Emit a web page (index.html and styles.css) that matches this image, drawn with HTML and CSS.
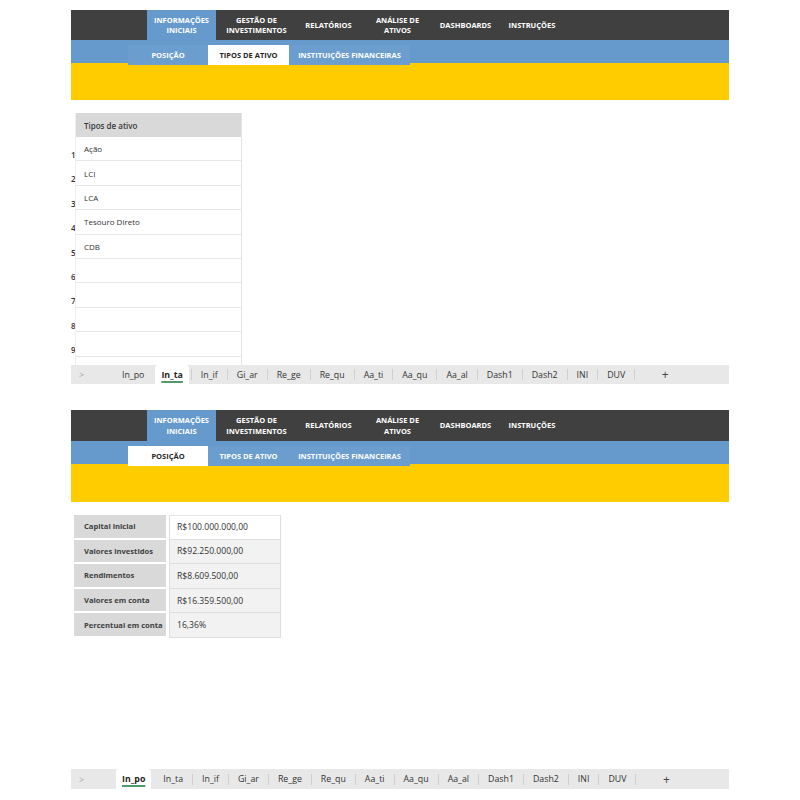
FILE: index.html
```html
<!DOCTYPE html>
<html lang="pt">
<head>
<meta charset="utf-8">
<title>Planilha</title>
<link rel="stylesheet" href="styles.css">
</head>
<body>
<div class="sheet sheet-one">
  <div class="nav">
    <div class="nav-spacer"></div>
    <div class="nav-item active w1">INFORMAÇÕES<br>INICIAIS</div>
    <div class="nav-item w2">GESTÃO DE<br>INVESTIMENTOS</div>
    <div class="nav-item w3">RELATÓRIOS</div>
    <div class="nav-item w4">ANÁLISE DE<br>ATIVOS</div>
    <div class="nav-item w5">DASHBOARDS</div>
    <div class="nav-item w6">INSTRUÇÕES</div>
  </div>
  <div class="subnav">
    <div class="subtabs">
      <div class="sub s1">POSIÇÃO</div>
      <div class="sub s2 on">TIPOS DE ATIVO</div>
      <div class="sub s3">INSTITUIÇÕES FINANCEIRAS</div>
    </div>
  </div>
  <div class="banner"></div>
  <div class="content content-one">
    <div class="list">
      <div class="rownums">
        <div class="rn head"></div>
        <div class="rn">1</div><div class="rn">2</div><div class="rn">3</div>
        <div class="rn">4</div><div class="rn">5</div><div class="rn">6</div>
        <div class="rn">7</div><div class="rn">8</div><div class="rn">9</div>
      </div>
      <div class="types">
        <div class="trow thead">Tipos de ativo</div>
        <div class="trow">Ação</div>
        <div class="trow">LCI</div>
        <div class="trow">LCA</div>
        <div class="trow">Tesouro Direto</div>
        <div class="trow">CDB</div>
        <div class="trow"></div>
        <div class="trow"></div>
        <div class="trow"></div>
        <div class="trow"></div>
        <div class="trow"></div>
      </div>
    </div>
  </div>
  <div class="tabbar">
    <div class="arrow">&gt;</div>
    <div class="tab first">In_po</div>
    <div class="tab on">In_ta</div>
    <span class="sep"></span>
    <div class="tab">In_if</div><span class="sep"></span>
    <div class="tab">Gi_ar</div><span class="sep"></span>
    <div class="tab">Re_ge</div><span class="sep"></span>
    <div class="tab">Re_qu</div><span class="sep"></span>
    <div class="tab">Aa_ti</div><span class="sep"></span>
    <div class="tab">Aa_qu</div><span class="sep"></span>
    <div class="tab">Aa_al</div><span class="sep"></span>
    <div class="tab">Dash1</div><span class="sep"></span>
    <div class="tab">Dash2</div><span class="sep"></span>
    <div class="tab">INI</div><span class="sep"></span>
    <div class="tab">DUV</div><span class="sep"></span>
    <div class="plus">+</div>
  </div>
</div>

<div class="sheet sheet-two">
  <div class="nav nav-two">
    <div class="nav-spacer"></div>
    <div class="nav-item active w1">INFORMAÇÕES<br>INICIAIS</div>
    <div class="nav-item w2">GESTÃO DE<br>INVESTIMENTOS</div>
    <div class="nav-item w3">RELATÓRIOS</div>
    <div class="nav-item w4">ANÁLISE DE<br>ATIVOS</div>
    <div class="nav-item w5">DASHBOARDS</div>
    <div class="nav-item w6">INSTRUÇÕES</div>
  </div>
  <div class="subnav">
    <div class="subtabs">
      <div class="sub s1 on">POSIÇÃO</div>
      <div class="sub s2">TIPOS DE ATIVO</div>
      <div class="sub s3">INSTITUIÇÕES FINANCEIRAS</div>
    </div>
  </div>
  <div class="banner banner-two"></div>
  <div class="content content-two">
    <div class="kv">
      <div class="kv-row"><div class="k">Capital inicial</div><div class="v v-first">R$100.000.000,00</div></div>
      <div class="kv-row"><div class="k">Valores investidos</div><div class="v">R$92.250.000,00</div></div>
      <div class="kv-row"><div class="k">Rendimentos</div><div class="v">R$8.609.500,00</div></div>
      <div class="kv-row"><div class="k">Valores em conta</div><div class="v">R$16.359.500,00</div></div>
      <div class="kv-row"><div class="k">Percentual em conta</div><div class="v">16,36%</div></div>
    </div>
  </div>
  <div class="tabbar tabbar-two">
    <div class="arrow">&gt;</div>
    <div class="tab on">In_po</div>
    <div class="tab">In_ta</div><span class="sep"></span>
    <div class="tab">In_if</div><span class="sep"></span>
    <div class="tab">Gi_ar</div><span class="sep"></span>
    <div class="tab">Re_ge</div><span class="sep"></span>
    <div class="tab">Re_qu</div><span class="sep"></span>
    <div class="tab">Aa_ti</div><span class="sep"></span>
    <div class="tab">Aa_qu</div><span class="sep"></span>
    <div class="tab">Aa_al</div><span class="sep"></span>
    <div class="tab">Dash1</div><span class="sep"></span>
    <div class="tab">Dash2</div><span class="sep"></span>
    <div class="tab">INI</div><span class="sep"></span>
    <div class="tab">DUV</div><span class="sep"></span>
    <div class="plus">+</div>
  </div>
</div>
</body>
</html>
```

FILE: styles.css
```css
* { box-sizing: border-box; }
html, body { margin: 0; padding: 0; background: #ffffff; }
body { font-family: "Open Sans", "Liberation Sans", sans-serif; color: #333; }

.sheet { width: 658px; margin-left: 71px; }
.sheet-one { margin-top: 10px; }
.sheet-two { margin-top: 26px; }

/* top navigation */
.nav {
  display: flex;
  height: 30px;
  background: #404040;
}
.nav-two { height: 31px; }
.nav-spacer { width: 76px; flex: none; }
.nav-item {
  flex: none;
  display: flex;
  align-items: center;
  justify-content: center;
  text-align: center;
  color: #ffffff;
  font-weight: 700;
  font-size: 7.5px;
  line-height: 10.5px;
}
.nav-item.active { background: #6699cc; }
.w1 { width: 69px; }
.w2 { width: 81px; }
.w3 { width: 63px; }
.w4 { width: 75px; }
.w5 { width: 61px; }
.w6 { width: 72px; }

/* sub navigation */
.subnav {
  display: flex;
  height: 23px;
  background: #6699cc;
  padding-left: 57px;
  position: relative;
  z-index: 1;
  align-items: flex-end;
}
.subtabs { display: flex; height: 20px; margin-bottom: -2px; background: #6b9dcf; }
.sub {
  display: flex;
  align-items: center;
  justify-content: center;
  color: #ffffff;
  font-weight: 700;
  font-size: 7.5px;
}
.sub.on { background: #ffffff; color: #262626; }
.s1 { width: 80px; }
.s2 { width: 81px; }
.s3 { width: 121px; }

.banner { height: 37px; background: #ffcc00; }
.banner-two { height: 38px; }

/* content area */
.content { overflow: hidden; }
.content-one { height: 265px; padding-top: 13px; }
.content-two { height: 267px; padding-top: 12px; padding-left: 3px; }

.list { display: flex; }
.rownums { width: 4px; flex: none; overflow: hidden; }
.rn {
  height: 24.4px;
  font-size: 8px;
  font-weight: 600;
  color: #333;
  text-align: right;
  padding-top: 13px;
  line-height: 10px;
  white-space: nowrap;
}
.rn.head { height: 24px; padding: 0; }
.types { width: 167px; flex: none; border-right: 1px solid #e4e4e4; border-left: 1px solid #eeeeee; }
.trow {
  height: 24.4px;
  padding-left: 8px;
  font-size: 8px;
  color: #333;
  display: flex;
  align-items: center;
  border-bottom: 1px solid #e6e6e6;
  background: #ffffff;
}
.trow.thead {
  height: 24px;
  background: #d9d9d9;
  font-weight: 600;
  color: #3a3a3a;
  border-bottom: none;
}

/* key / value table */
.kv { display: flex; flex-direction: column; padding-top: 1px; }
.kv-row { display: flex; height: 24.6px; }
.k {
  width: 92px;
  background: #d9d9d9;
  border-bottom: 2px solid #ffffff;
  font-size: 7.6px;
  font-weight: 700;
  color: #404040;
  padding-left: 10px;
  display: flex;
  align-items: center;
}
.v {
  margin-left: 3px;
  width: 112px;
  background: #f2f2f2;
  border: 1px solid #dedede;
  border-top: none;
  font-size: 8.6px;
  color: #333;
  padding-left: 7px;
  display: flex;
  align-items: center;
}
.v-first { background: #ffffff; border-top: 1px solid #e6e6e6; }

/* sheet tab bar */
.tabbar {
  display: flex;
  align-items: stretch;
  height: 19px;
  background: #e8e8e8;
  font-size: 8.8px;
  color: #333;
}
.tabbar-two { height: 20px; }
.arrow {
  width: 40px;
  flex: none;
  padding-left: 8px;
  display: flex;
  align-items: center;
  color: #a8a8a8;
  font-size: 9px;
}
.tabbar-two .arrow { width: 45px; }
.tab {
  display: flex;
  align-items: center;
  padding: 0 9px;
  flex: none;
  white-space: nowrap;
}
.tab.first { padding: 0 11px; }
.tab.on {
  background: #ffffff;
  font-weight: 700;
  color: #1f1f1f;
  padding: 0 6px;
  margin-right: 2px;
  text-decoration: underline;
  text-decoration-color: #4e9a6a;
  text-decoration-thickness: 2px;
  text-underline-offset: 3px;
  border-radius: 3px 3px 0 0;
}
.tabbar-two .tab.on { margin-right: 3px; }
.sep {
  width: 1px;
  height: 11px;
  align-self: center;
  background: #cfcfcf;
  flex: none;
}
.plus {
  width: 60px;
  display: flex;
  align-items: center;
  justify-content: center;
  font-size: 12px;
  color: #444;
}
```
